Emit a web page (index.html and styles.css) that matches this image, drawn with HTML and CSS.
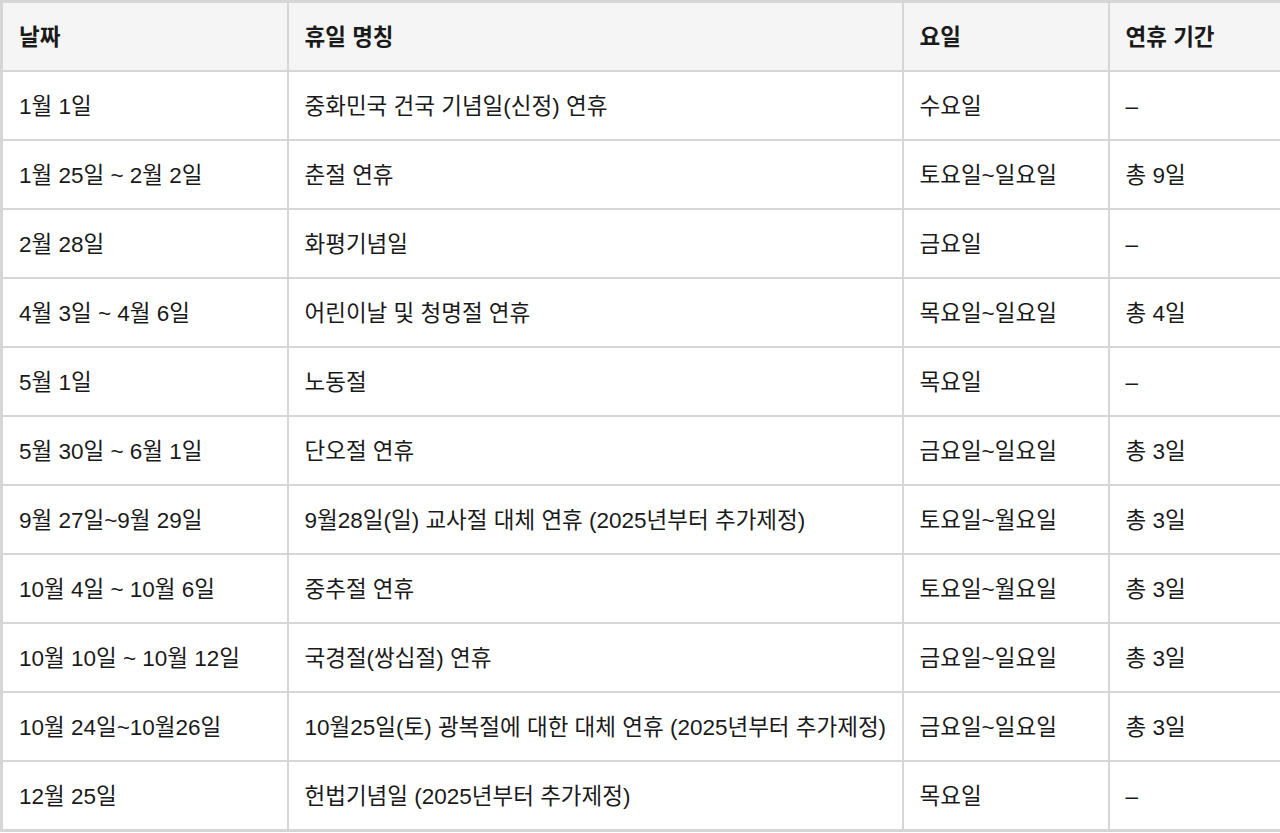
FILE: index.html
```html
<!DOCTYPE html>
<html lang="ko">
<head>
<meta charset="utf-8">
<link rel="stylesheet" href="styles.css">
</head>
<body>
<table class="holidays">
  <colgroup>
    <col class="c-date"><col class="c-name"><col class="c-day"><col class="c-len">
  </colgroup>
  <thead>
    <tr><th>날짜</th><th>휴일 명칭</th><th>요일</th><th>연휴 기간</th></tr>
  </thead>
  <tbody>
    <tr><td>1월 1일</td><td>중화민국 건국 기념일(신정) 연휴</td><td>수요일</td><td>–</td></tr>
    <tr><td>1월 25일 ~ 2월 2일</td><td>춘절 연휴</td><td>토요일~일요일</td><td>총 9일</td></tr>
    <tr><td>2월 28일</td><td>화평기념일</td><td>금요일</td><td>–</td></tr>
    <tr><td>4월 3일 ~ 4월 6일</td><td>어린이날 및 청명절 연휴</td><td>목요일~일요일</td><td>총 4일</td></tr>
    <tr><td>5월 1일</td><td>노동절</td><td>목요일</td><td>–</td></tr>
    <tr><td>5월 30일 ~ 6월 1일</td><td>단오절 연휴</td><td>금요일~일요일</td><td>총 3일</td></tr>
    <tr><td>9월 27일~9월 29일</td><td>9월28일(일) 교사절 대체 연휴 (2025년부터 추가제정)</td><td>토요일~월요일</td><td>총 3일</td></tr>
    <tr><td>10월 4일 ~ 10월 6일</td><td>중추절 연휴</td><td>토요일~월요일</td><td>총 3일</td></tr>
    <tr><td>10월 10일 ~ 10월 12일</td><td>국경절(쌍십절) 연휴</td><td>금요일~일요일</td><td>총 3일</td></tr>
    <tr><td>10월 24일~10월26일</td><td>10월25일(토) 광복절에 대한 대체 연휴 (2025년부터 추가제정)</td><td>금요일~일요일</td><td>총 3일</td></tr>
    <tr><td>12월 25일</td><td>헌법기념일 (2025년부터 추가제정)</td><td>목요일</td><td>–</td></tr>
  </tbody>
</table>
</body>
</html>
```
FILE: styles.css
```css
html, body {
  margin: 0;
  padding: 0;
  background: #ffffff;
}
body {
  font-family: "Liberation Sans", "Noto Sans CJK KR", sans-serif;
  color: #1a1a1a;
}
.holidays {
  width: 1280px;
  border-collapse: collapse;
  border: 3px solid #d6d6d6;
  table-layout: fixed;
  font-size: 22.5px;
}
.c-date { width: 286px; }
.c-name { width: 615px; }
.c-day { width: 206px; }
.c-len { width: 173px; }
.holidays th,
.holidays td {
  border: 2px solid #d6d6d6;
  padding: 3px 16px 0;
  height: 64px;
  text-align: left;
  vertical-align: middle;
  white-space: nowrap;
  line-height: 1.3;
}
.holidays th {
  background: #f5f5f5;
  font-weight: 700;
}
```
